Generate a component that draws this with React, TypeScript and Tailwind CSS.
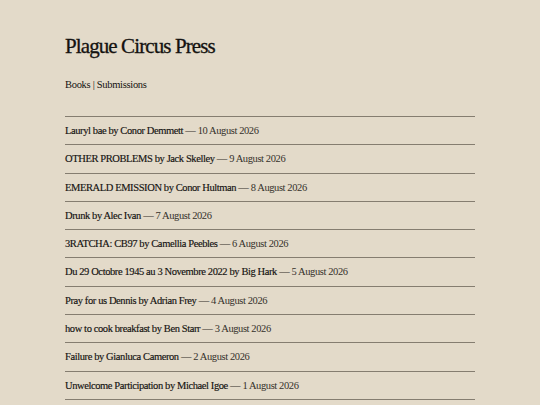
const posts = [
  { title: "Lauryl bae", author: "Conor Demmett", date: "10 August 2026" },
  { title: "OTHER PROBLEMS", author: "Jack Skelley", date: "9 August 2026" },
  { title: "EMERALD EMISSION", author: "Conor Hultman", date: "8 August 2026" },
  { title: "Drunk", author: "Alec Ivan", date: "7 August 2026" },
  { title: "3RATCHA: CB97", author: "Camellia Peebles", date: "6 August 2026" },
  { title: "Du 29 Octobre 1945 au 3 Novembre 2022", author: "Big Hark", date: "5 August 2026" },
  { title: "Pray for us Dennis", author: "Adrian Frey", date: "4 August 2026" },
  { title: "how to cook breakfast", author: "Ben Starr", date: "3 August 2026" },
  { title: "Failure", author: "Gianluca Cameron", date: "2 August 2026" },
  { title: "Unwelcome Participation", author: "Michael Igoe", date: "1 August 2026" },
];

export default function App() {
  return (
    <div
      className="min-h-screen bg-[#e3dac9] text-[#141210]"
      style={{ fontFamily: '"Liberation Serif", "DejaVu Serif", serif' }}
    >
      <div className="mx-[65px] pt-[32px]">
        {/* Header */}
        <h1 className="text-[21px] leading-[28px] tracking-[-0.9px] [-webkit-text-stroke:0.3px_#141210]">
          Plague Circus Press
        </h1>
        <nav className="mt-[18px] text-[10.5px] leading-[14px] tracking-[-0.3px]">
          <a>Books</a> | <a>Submissions</a>
        </nav>

        {/* Posts */}
        <ul className="mt-[24px] w-[410px] border-t border-[#857d70]">
          {posts.map((p) => (
            <li
              key={p.title}
              className="border-b border-[#857d70] py-[7px] text-[10.5px] leading-[13.3px] tracking-[-0.4px]"
            >
              <a className="text-[#141210] [-webkit-text-stroke:0.15px_#141210]">
                {p.title} by {p.author}
              </a>
              <span className="text-[#35312b]"> — {p.date}</span>
            </li>
          ))}
        </ul>
      </div>
    </div>
  );
}
